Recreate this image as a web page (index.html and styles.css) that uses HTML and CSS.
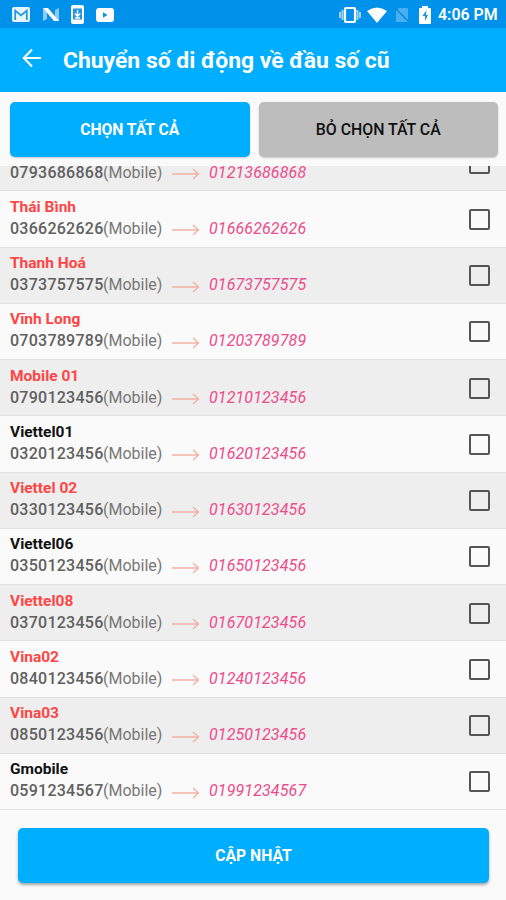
FILE: index.html
```html
<!DOCTYPE html>
<html lang="vi">
<head>
<meta charset="utf-8">
<title>Chuyển số di động về đầu số cũ</title>
<link rel="stylesheet" href="styles.css">
</head>
<body>
<svg class="defs" width="0" height="0"><symbol id="arrow" viewBox="0 0 28 12"><path d="M0 6H26M21 1L26.5 6L21 11" fill="none" stroke="#f2b3a7" stroke-width="1.4"/></symbol></svg>
<header class="status">
  <div class="notifications">
    <svg width="18" height="15" viewBox="0 0 18 15"><rect width="18" height="15" rx="2" fill="#e5f4ff"/><path d="M3.2 13V3.5L9 8.3l5.800-4.800V13" fill="none" stroke="#2196e5" stroke-width="1.700"/></svg>
    <svg width="18" height="15" viewBox="0 0 18 15"><path d="M1 1v13l4-2V5zM17 14V1l-4 2v7z" fill="#8accff"/><path d="M1 1h5l11 13h-5z" fill="#fff"/></svg>
    <svg width="13" height="19" viewBox="0 0 13 19"><rect width="13" height="19" rx="2" fill="#fff"/><path d="M2 3.500h9v11H2z" fill="#2195e6"/><path d="M6.500 5v6M3.800 8.500l2.700 3 2.700-3M4 13h5" fill="none" stroke="#fff" stroke-width="1.400"/></svg>
    <svg width="18" height="14" viewBox="0 0 18 14"><rect width="18" height="14" rx="3" fill="#fff"/><path d="M7 4.300v5.400L11.500 7z" fill="#0b91e9"/></svg>
  </div>
  <div class="system">
    <svg width="22" height="18" viewBox="0 0 22 18"><path d="M1 6v6M3.500 4v10M18.500 4v10M21 6v6" stroke="#9dd4ff" stroke-width="2"/><rect x="6" y="2" width="10" height="14" rx="1" fill="none" stroke="#fff" stroke-width="2.200"/></svg>
    <svg width="20" height="16" viewBox="0 0 20 16"><path d="M0 4Q10-3 20 4L10 16z" fill="#fff"/></svg>
    <svg width="14" height="16" viewBox="0 0 14 16"><path d="M4 1h9v14H1V4z" fill="#4aaff2"/><path d="M0 1l14 14" stroke="#0a86d8" stroke-width="1.300"/></svg>
    <svg width="12" height="18" viewBox="0 0 12 18"><path d="M3 2V0h6v2h2q1 0 1 1v14q0 1-1 1H1q-1 0-1-1V3q0-1 1-1z" fill="#fff"/><path d="M7.500 4L3.500 10H6v5l3-6H6.800z" fill="#1692e8"/></svg>
    <span class="clock">4:06 PM</span>
  </div>
</header>
<div class="toolbar">
  <svg width="20" height="20" viewBox="0 0 20 20"><path d="M19 10H2M10 1.500L1.800 10L10 18.500" fill="none" stroke="#fff" stroke-width="2.100"/></svg>
  <h1>Chuyển số di động về đầu số cũ</h1>
</div>
<div class="actions">
  <button class="button bold">CHỌN TẤT CẢ</button>
  <button class="button gray">BỎ CHỌN TẤT CẢ</button>
</div>
<main class="list">
  <div class="row alt partial"><div class="line"><b>0793686868</b><span class="type">(Mobile)</span><svg class="arrow"><use href="#arrow"/></svg><i>01213686868</i></div><span class="check"></span></div>
  <div class="row"><div><div class="name">Thái Bình</div><div class="line"><b>0366262626</b><span class="type">(Mobile)</span><svg class="arrow"><use href="#arrow"/></svg><i>01666262626</i></div></div><span class="check"></span></div>
  <div class="row alt"><div><div class="name">Thanh Hoá</div><div class="line"><b>0373757575</b><span class="type">(Mobile)</span><svg class="arrow"><use href="#arrow"/></svg><i>01673757575</i></div></div><span class="check"></span></div>
  <div class="row"><div><div class="name">Vĩnh Long</div><div class="line"><b>0703789789</b><span class="type">(Mobile)</span><svg class="arrow"><use href="#arrow"/></svg><i>01203789789</i></div></div><span class="check"></span></div>
  <div class="row alt"><div><div class="name">Mobile 01</div><div class="line"><b>0790123456</b><span class="type">(Mobile)</span><svg class="arrow"><use href="#arrow"/></svg><i>01210123456</i></div></div><span class="check"></span></div>
  <div class="row"><div><div class="name dark">Viettel01</div><div class="line"><b>0320123456</b><span class="type">(Mobile)</span><svg class="arrow"><use href="#arrow"/></svg><i>01620123456</i></div></div><span class="check"></span></div>
  <div class="row alt"><div><div class="name">Viettel 02</div><div class="line"><b>0330123456</b><span class="type">(Mobile)</span><svg class="arrow"><use href="#arrow"/></svg><i>01630123456</i></div></div><span class="check"></span></div>
  <div class="row"><div><div class="name dark">Viettel06</div><div class="line"><b>0350123456</b><span class="type">(Mobile)</span><svg class="arrow"><use href="#arrow"/></svg><i>01650123456</i></div></div><span class="check"></span></div>
  <div class="row alt"><div><div class="name">Viettel08</div><div class="line"><b>0370123456</b><span class="type">(Mobile)</span><svg class="arrow"><use href="#arrow"/></svg><i>01670123456</i></div></div><span class="check"></span></div>
  <div class="row"><div><div class="name">Vina02</div><div class="line"><b>0840123456</b><span class="type">(Mobile)</span><svg class="arrow"><use href="#arrow"/></svg><i>01240123456</i></div></div><span class="check"></span></div>
  <div class="row alt"><div><div class="name">Vina03</div><div class="line"><b>0850123456</b><span class="type">(Mobile)</span><svg class="arrow"><use href="#arrow"/></svg><i>01250123456</i></div></div><span class="check"></span></div>
  <div class="row"><div><div class="name dark">Gmobile</div><div class="line"><b>0591234567</b><span class="type">(Mobile)</span><svg class="arrow"><use href="#arrow"/></svg><i>01991234567</i></div></div><span class="check"></span></div>
</main>
<footer class="footer"><button class="button bold update">CẬP NHẬT</button></footer>
</body>
</html>
```
FILE: styles.css
```css
* { box-sizing: border-box; }
body {
  margin: 0;
  height: 900px;
  display: flex;
  flex-direction: column;
  overflow: hidden;
  background: #fafafa;
  font-family: Roboto, sans-serif;
}
.defs { position: absolute; }
svg { flex: none; display: block; }
.status {
  height: 28px;
  flex: none;
  display: flex;
  justify-content: space-between;
  align-items: center;
  padding: 1px 9px 0 12px;
  background: #0091ea;
  color: #fff;
}
.notifications { display: flex; align-items: center; gap: 11.500px; }
.system { display: flex; align-items: center; }
.system svg:nth-child(1) { margin-right: 6px; }
.system svg:nth-child(2) { margin-right: 8px; }
.system svg:nth-child(3) { margin-right: 10px; }
.clock { margin-left: 7px; width: 59px; font-size: 15.900px; font-weight: 600; line-height: 20px; white-space: nowrap; }
.toolbar {
  height: 64px;
  flex: none;
  display: flex;
  align-items: center;
  gap: 21px;
  padding: 0 22px 4px;
  background: #00aeff;
  color: #fff;
}
h1 { margin: 6px 0 0; font-size: 22.900px; line-height: 30px; font-weight: 700; white-space: nowrap; }
.actions {
  height: 74px;
  flex: none;
  display: flex;
  gap: 9px;
  padding: 10px 8px 9px 10px;
}
.button {
  flex: 1;
  height: 55px;
  padding: 0;
  border: 0;
  border-radius: 5px;
  background: #00aeff;
  color: #fff;
  font: 500 15.900px/20px Roboto, sans-serif;
  box-shadow: 0 1px 2px #0003;
}
.bold { font-weight: 700; font-size: 15.700px; }
.gray { background: #bdbdbd; color: #111; }
.list {
  height: 644px;
  flex: none;
  display: flex;
  flex-direction: column;
  overflow: hidden;
}
.row {
  height: 56.250px;
  flex: none;
  display: flex;
  justify-content: space-between;
  padding: 5.500px 16px 0 10px;
  border-bottom: 1px solid #e1e1e1;
}
.alt { background: #eee; }
.name { font-size: 15.500px; line-height: 21px; font-weight: 700; color: #ff4545; }
.dark { color: #111; }
.line { display: flex; align-items: center; height: 22px; font-size: 16px; line-height: 22px; color: #777; }
.line b { width: 93px; font-weight: 500; letter-spacing: .260px; color: #606060; }
.type { width: 62px; }
.arrow { width: 28px; height: 12px; margin: 3px 0 0 7px; }
.line i { margin-left: 9px; letter-spacing: .120px; color: #ec4c8b; }
.check { width: 21px; height: 21px; margin-top: 12px; border: 2px solid #555; border-radius: 2px; }
.partial { height: 25.250px; padding-top: 0; }
.partial .line { margin-top: -4.500px; }
.partial .check { margin-top: -13.500px; }
.footer { padding: 18px 17px 0 18px; display: flex; }
.update { box-shadow: 0 2px 3px #0005; }
```
